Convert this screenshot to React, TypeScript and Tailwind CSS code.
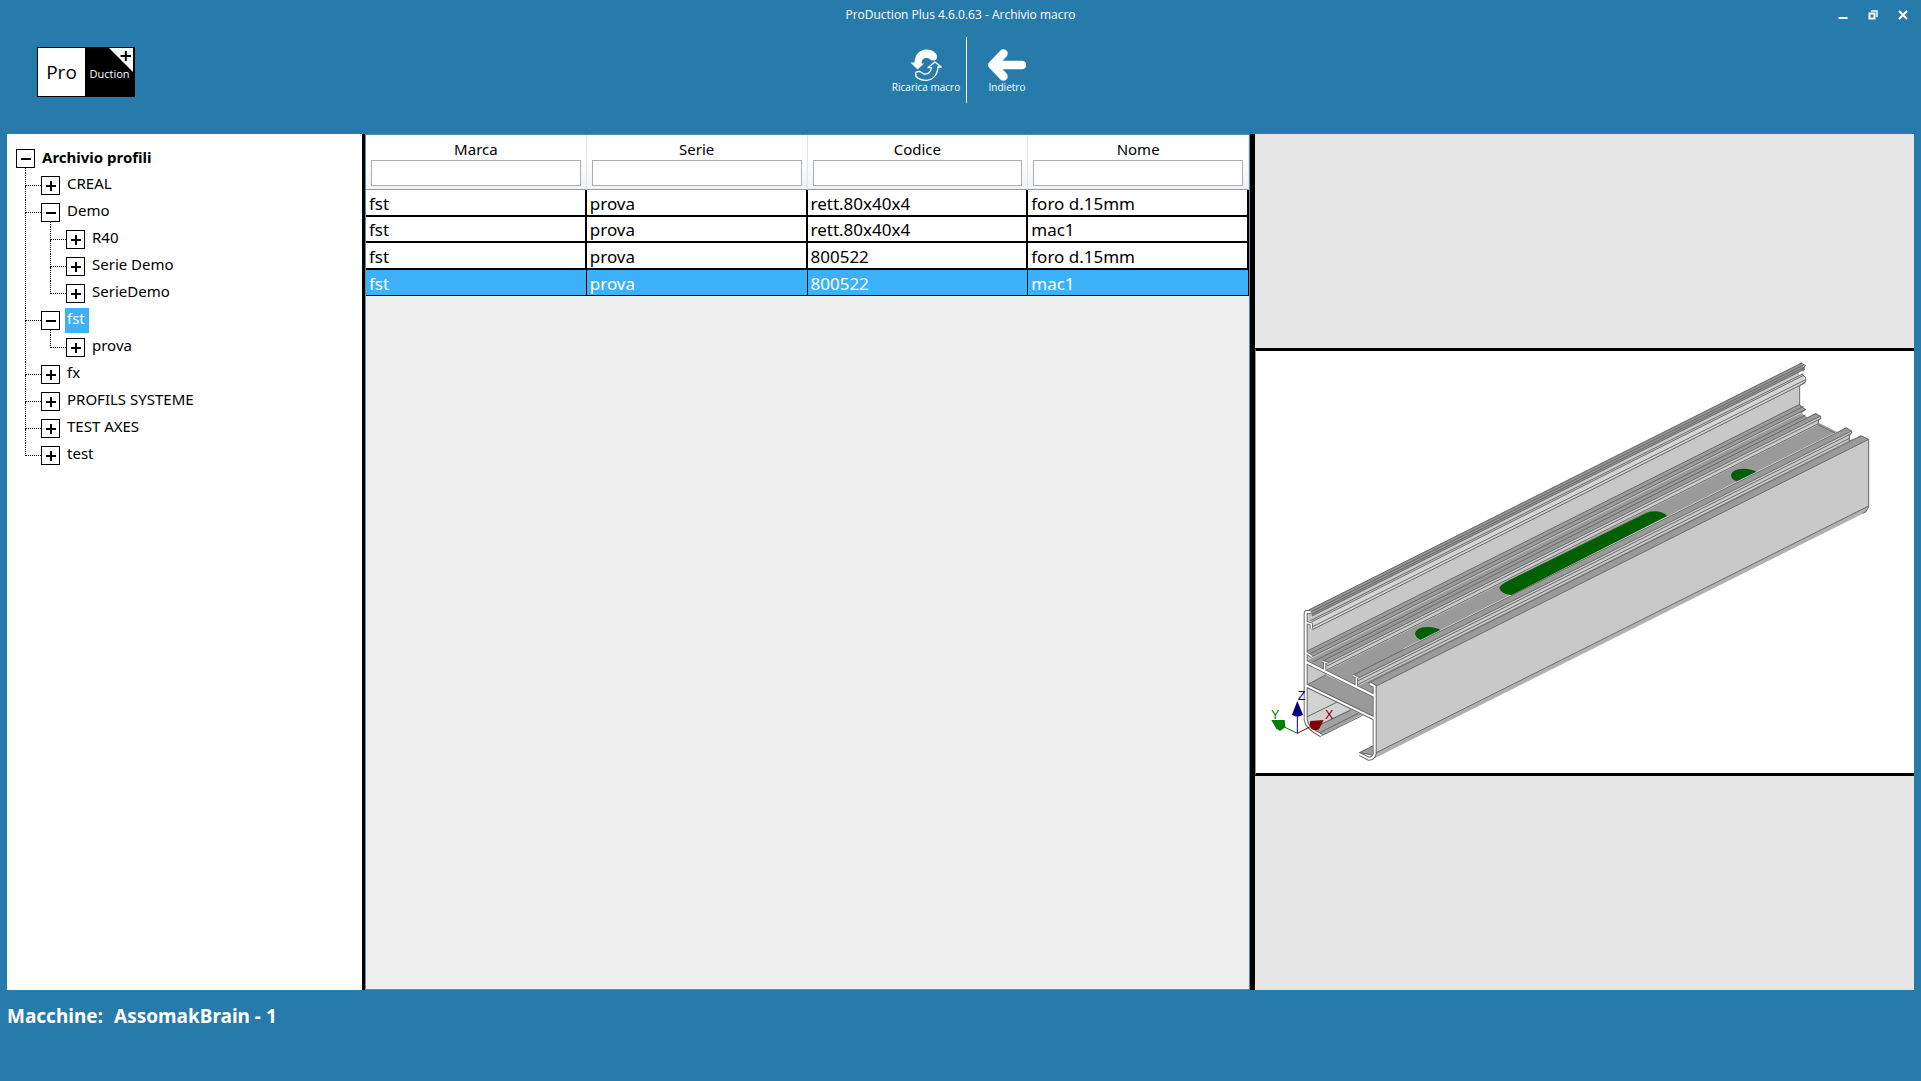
import { useState } from "react";

type TreeNode = { id: string; label: string; children?: TreeNode[] };

const TREE: TreeNode[] = [
  { id: "creal", label: "CREAL" },
  {
    id: "demo",
    label: "Demo",
    children: [
      { id: "demo-r40", label: "R40" },
      { id: "demo-serie", label: "Serie Demo" },
      { id: "demo-serie2", label: "SerieDemo" },
    ],
  },
  { id: "fst", label: "fst", children: [{ id: "fst-prova", label: "prova" }] },
  { id: "fx", label: "fx" },
  { id: "profils", label: "PROFILS SYSTEME" },
  { id: "axes", label: "TEST AXES" },
  { id: "test", label: "test" },
];

const COLUMNS = ["Marca", "Serie", "Codice", "Nome"];

const ROWS = [
  ["fst", "prova", "rett.80x40x4", "foro d.15mm"],
  ["fst", "prova", "rett.80x40x4", "mac1"],
  ["fst", "prova", "800522", "foro d.15mm"],
  ["fst", "prova", "800522", "mac1"],
];

function Logo() {
  return (
    <div className="relative flex h-[50px] w-[98px] border border-black bg-black text-black">
      <span className="flex w-[47px] items-center justify-center bg-white text-[19px]">Pro</span>
      <span className="flex flex-1 items-center justify-center pt-1 text-[11px] text-white">Duction</span>
      <svg className="absolute top-0 right-0 h-[25px] w-[25px]" viewBox="0 0 25 25">
        <path d="M0 0H24V24Z" fill="#fff" />
        <path d="M11.500 8H22M16.800 3V13" stroke="#000" strokeWidth="2" />
      </svg>
    </div>
  );
}

function ReloadIcon() {
  return (
    <svg className="h-8 w-8" viewBox="0 0 32 32" fill="none">
      <path
        d="M27 8.500C27.500 4 22 .5 16.500 .5 9.500 .5 5 5.500 4.500 13.500H.5L7.500 20.500 14 14.500H11.500C11.500 10.500 14 8.500 17.500 9 20 9.500 20.500 11.500 23 11.500 25.500 11.500 26.800 10.500 27 8.500Z"
        fill="#fff"
      />
      <path
        d="M5.500 24.500C5 28.500 10 31.300 15.500 31.300 22.500 31.300 27.500 26.500 28 18H31.200L25 13 18 18.500H21.500C21.500 22.500 18 25.500 14.500 25 12 24.500 11.500 22.500 9 22.500 7 22.500 5.700 23 5.500 24.500Z"
        stroke="#fff"
        strokeWidth="1.300"
        strokeLinejoin="round"
      />
    </svg>
  );
}

function BackIcon() {
  return (
    <svg className="h-8 w-[38px]" viewBox="0 0 38 32" fill="none">
      <path d="M15.500 4.500L4.500 16L15.500 27.500M5 16H34" stroke="#fff" strokeWidth="8.500" strokeLinecap="round" strokeLinejoin="round" />
    </svg>
  );
}

function ToggleBox({ open, label, onClick }: { open: boolean; label: string; onClick: () => void }) {
  return (
    <button
      type="button"
      aria-label={label}
      aria-expanded={open}
      onClick={onClick}
      className="h-[19px] w-[19px] shrink-0 border border-black bg-white"
    >
      <svg className="h-[17px] w-[17px]" viewBox="0 0 17 17" shapeRendering="crispEdges">
        <path d={open ? "M4 8H14V10H4Z" : "M4 8H8V4H10V8H14V10H10V14H8V10H4Z"} />
      </svg>
    </button>
  );
}

function TreeItem({
  node,
  last,
  selected,
  onSelect,
}: {
  node: TreeNode;
  last: boolean;
  selected: string;
  onSelect: (id: string) => void;
}) {
  const [open, setOpen] = useState(Boolean(node.children));
  const showChildren = open && node.children;

  return (
    <li className="flex">
      <div className="flex w-4 shrink-0 flex-col">
        <div className="h-[13px] border-b border-l border-dotted border-black" />
        {!last && <div className="flex-1 border-l border-dotted border-black" />}
      </div>
      <div>
        <div className="flex h-[27px] gap-[5px]">
          <div className="flex flex-col pt-[3px]">
            <ToggleBox open={open} label={node.label} onClick={() => setOpen(!open)} />
            {showChildren && <div className="ml-[9px] flex-1 border-l border-dotted border-black" />}
          </div>
          <button
            type="button"
            onClick={() => onSelect(node.id)}
            className={
              selected === node.id
                ? "h-[25px] bg-[#3cb1f7] pr-1 pb-[5px] pl-[2px] leading-5 text-white"
                : "h-[25px] pr-1 pb-[5px] pl-[2px] leading-5"
            }
          >
            {node.label}
          </button>
        </div>
        {showChildren && <TreeList nodes={node.children!} selected={selected} onSelect={onSelect} />}
      </div>
    </li>
  );
}

function TreeList({
  nodes,
  selected,
  onSelect,
}: {
  nodes: TreeNode[];
  selected: string;
  onSelect: (id: string) => void;
}) {
  return (
    <ul className="ml-[9px]">
      {nodes.map((node, i) => (
        <TreeItem key={node.id} node={node} last={i === nodes.length - 1} selected={selected} onSelect={onSelect} />
      ))}
    </ul>
  );
}

function ProfileTree() {
  const [selected, setSelected] = useState("fst");
  const [open, setOpen] = useState(true);

  return (
    <nav className="bg-white pt-3 pl-[9px] text-[15px] leading-[22px] whitespace-nowrap">
      <div className="flex h-[27px] gap-[7px]">
        <div className="flex flex-col pt-[3px]">
          <ToggleBox open={open} label="Archivio profili" onClick={() => setOpen(!open)} />
          {open && <div className="ml-[9px] flex-1 border-l border-dotted border-black" />}
        </div>
        <span className="font-bold">Archivio profili</span>
      </div>
      {open && <TreeList nodes={TREE} selected={selected} onSelect={setSelected} />}
    </nav>
  );
}

function MacroTable() {
  const [current, setCurrent] = useState(3);

  return (
    <div className="border border-[#5f87a8] bg-[#efefef]">
      <table className="w-full table-fixed border-separate border-spacing-0">
        <thead>
          <tr>
            {COLUMNS.map((name) => (
              <th
                key={name}
                className="h-[55px] border-r border-b border-r-[#e3e5e8] border-b-[#999] bg-linear-to-b from-white from-40% to-[#f1f2f4] px-[5px] pt-[3px] align-top text-[15px] leading-[22px] font-normal"
              >
                <label className="flex flex-col">
                  {name}
                  <input type="text" className="h-[26px] w-full border border-[#abadb3] bg-white px-1" />
                </label>
              </th>
            ))}
          </tr>
        </thead>
        <tbody className="text-[17px] leading-[22px]">
          {ROWS.map((row, i) => (
            <tr
              key={i}
              onClick={() => setCurrent(i)}
              className={
                i === current ? "h-[26px] bg-[#3cb1f7] text-white odd:h-[27px]" : "h-[26px] bg-white text-black odd:h-[27px]"
              }
            >
              {row.map((cell, j) => (
                <td
                  key={j}
                  className={
                    i === current
                      ? "border-r border-b border-black pt-[2px] pl-[3px]"
                      : "border-r-2 border-b-2 border-black pt-[2px] pl-[3px]"
                  }
                >
                  {cell}
                </td>
              ))}
            </tr>
          ))}
        </tbody>
      </table>
    </div>
  );
}

// Extrusion of the profile: every edge of the near section runs along this vector.
const DX = 1479;
const DY = -741;

type Point = [number, number];

const STRIPS: { a: Point; b: Point; fill: string }[] = [
  { a: [168, 815], b: [170, 968], fill: "#c8c8c8" },
  { a: [176, 810], b: [186, 828], fill: "#969696" },
  { a: [181, 842], b: [187, 868], fill: "#d5d5d5" },
  { a: [170, 934], b: [188, 950], fill: "#9c9c9c" },
  { a: [188, 950], b: [172, 966], fill: "#c8c8c8" },
  { a: [172, 962], b: [281, 1016], fill: "#9a9a9a" },
  { a: [216, 961], b: [233, 969], fill: "#9a9a9a" },
  { a: [233, 969], b: [226, 995], fill: "#cbcbcb" },
  { a: [309, 1005], b: [326, 1014], fill: "#9a9a9a" },
  { a: [326, 1014], b: [319, 1042], fill: "#cbcbcb" },
  { a: [319, 1042], b: [354, 1029], fill: "#9a9a9a" },
  { a: [354, 1029], b: [377, 1039], fill: "#9a9a9a" },
  { a: [377, 1239], b: [371, 1256], fill: "#b0b0b0" },
  { a: [377, 1039], b: [377, 1239], fill: "#c9c9c9" },
];

const EDGES: Point[] = [
  [176, 810], [184, 815], [186, 822], [186, 828],
  [181, 842], [184, 846], [188, 860], [187, 869],
  [170, 934], [182, 940], [188, 949], [188, 966],
  [221, 961], [233, 969], [231, 978], [226, 992],
  [309, 1005], [326, 1014], [323, 1023], [319, 1036],
  [354, 1029], [377, 1039], [377, 1239],
];

const SECTION_BODY =
  "M182 816H170Q167 816 167 822V1140Q170 1165 214 1186M168 966L374 1068M168 1036L374 1136M360 1031L374 1039V1240Q372 1256 356 1256L330 1243";
const SECTION_RIBS = "M168 847L184 852V866M168 938L186 950M216 963L232 969M224 967V992M309 1006L325 1014M319 1014V1038";

const SMALL_HOLE = "M495 880Q498 862 532 861Q560 862 571 870L512 899Q495 893 495 880Z";

function strip(a: Point, b: Point) {
  return `M${a[0]} ${a[1]}l${DX} ${DY}L${b[0] + DX} ${b[1] + DY}L${b[0]} ${b[1]}Z`;
}

function ProfileDrawing() {
  return (
    <svg className="block w-full" viewBox="18 33 1974 1266" role="img" aria-label="Profilo 800522">
      {/* lower part seen between the legs */}
      <path d="M168 1035L260 1083L335 1124L215 1187L185 1172L168 1145Z" fill="#d2d2d2" />
      <path d="M190 1162L300 1108L335 1124L215 1187Z" fill="#a2a2a2" />
      <path d="M172 1130L262 1086M186 1166L303 1110M205 1180L325 1120M215 1187L338 1126" stroke="#686868" strokeWidth="3" />
      <path d="M170 965L235 1000L170 1035Z" fill="#c8c8c8" />
      <path d="M172 1034L228 1004L372 1070V1134Z" fill="#9a9a9a" />
      <path d="M172 1034L228 1004" stroke="#686868" strokeWidth="3" />
      <path d="M328 1238L372 1216V1246Z" fill="#9a9a9a" stroke="#686868" strokeWidth="3" />
      {/* floor in front of the ribs */}
      <path d="M250 1005L460 925L500 985L374 1066Z" fill="#9a9a9a" />

      {STRIPS.map((s, i) => (
        <path key={i} d={strip(s.a, s.b)} fill={s.fill} />
      ))}
      {EDGES.map(([x, y], i) => (
        <path key={i} d={`M${x} ${y}l${DX} ${DY}`} stroke="#686868" strokeWidth="3" />
      ))}

      {/* far end outline */}
      <path
        d="M1648 73L1655 70L1667 77L1659 84V95M1655 103L1667 112V125L1649 137V196L1667 209L1652 217L1667 232M1696 221L1712 229V237L1705 240V255L1755 279M1782 266L1790 264L1805 273V280L1798 283V303M1825 290L1835 288L1856 298V500L1848 515L1838 520"
        fill="none"
        stroke="#686868"
        strokeWidth="3"
      />

      {/* machinings */}
      <g fill="#005f00">
        <path d={SMALL_HOLE} />
        <path d={SMALL_HOLE} transform="translate(948 -475)" />
        <path d="M748 745Q750 734 775 722L1190 518Q1225 506 1252 527L785 765Q755 763 748 745Z" />
      </g>

      {/* near section */}
      <g fill="none" strokeLinejoin="round">
        <path d={SECTION_BODY} stroke="#686868" strokeWidth="12" />
        <path d={SECTION_RIBS} stroke="#686868" strokeWidth="9" />
        <path d={SECTION_BODY} stroke="#fff" strokeWidth="6" />
        <path d={SECTION_RIBS} stroke="#fff" strokeWidth="4" />
      </g>

      {/* axes */}
      <g strokeWidth="3" fontSize="38" fontFamily="Liberation Sans, sans-serif">
        <path d="M142 1180L105 1162" stroke="#008000" />
        <path d="M142 1180L185 1158" stroke="#800000" />
        <path d="M142 1180V1120" stroke="#000080" />
        <path d="M64 1140H104L106 1162L90 1173L78 1165Z" fill="#008000" />
        <path d="M221 1140L181 1143Q176 1160 186 1168Q196 1174 207 1168Z" fill="#800000" />
        <path d="M142 1083L159 1124Q142 1135 126 1124Z" fill="#000080" />
        <text x="63" y="1138" fill="#008000">Y</text>
        <text x="225" y="1138" fill="#800000">X</text>
        <text x="143" y="1080" fill="#000080">Z</text>
      </g>
    </svg>
  );
}

function WindowButtons() {
  return (
    <div className="flex gap-[10px] pr-2">
      <button type="button" aria-label="Riduci" className="flex h-5 w-5 items-center justify-center">
        <svg className="h-3 w-3" viewBox="0 0 12 12">
          <path d="M1.500 8H10.500V10H1.500Z" fill="#fff" />
        </svg>
      </button>
      <button type="button" aria-label="Ripristina" className="flex h-5 w-5 items-center justify-center">
        <svg className="h-3 w-3" viewBox="0 0 12 12" fill="none" stroke="#fff">
          <path d="M2.500 4.500H7.500V9.500H2.500Z" strokeWidth="2" />
          <path d="M4 2H10V8" strokeWidth="1.500" />
        </svg>
      </button>
      <button type="button" aria-label="Chiudi" className="flex h-5 w-5 items-center justify-center">
        <svg className="h-3 w-3" viewBox="0 0 12 12" stroke="#fff" strokeWidth="2">
          <path d="M2 2L10 10M10 2L2 10" />
        </svg>
      </button>
    </div>
  );
}

export default function App() {
  return (
    <div className="flex min-h-screen flex-col bg-[#277bab] font-['Noto_Sans','Open_Sans',sans-serif] text-black">
      <header className="flex h-[134px] flex-col font-['Open_Sans','Noto_Sans',sans-serif] text-white">
        <div className="grid h-[30px] grid-cols-[1fr_auto_1fr] items-center">
          <div />
          <h1 className="text-[12px]">ProDuction Plus 4.6.0.63 - Archivio macro</h1>
          <div className="flex justify-end">
            <WindowButtons />
          </div>
        </div>
        <div className="grid grid-cols-[1fr_auto_1fr] pt-[7px]">
          <div className="pt-[10px] pl-[37px]">
            <Logo />
          </div>
          <div className="ml-3 flex h-[66px] text-[10px] leading-3">
            <button type="button" className="flex w-20 flex-col items-center pt-3 whitespace-nowrap">
              <ReloadIcon />
              Ricarica macro
            </button>
            <div className="w-px bg-white" />
            <button type="button" className="flex w-20 flex-col items-center pt-3">
              <BackIcon />
              Indietro
            </button>
          </div>
          <div />
        </div>
      </header>

      <main className="mx-[7px] grid flex-1 grid-cols-[355fr_893fr_659fr] bg-black">
        <ProfileTree />
        <div className="grid border-r-[5px] border-l-[3px] border-black">
          <MacroTable />
        </div>
        <aside className="flex flex-col bg-[#e6e6e6]">
          <div className="flex-1" />
          <div className="border-y-[3px] border-l border-black border-l-[#999] bg-white">
            <ProfileDrawing />
          </div>
          <div className="flex-1" />
        </aside>
      </main>

      <footer className="flex h-[91px] gap-[11px] px-[7px] pt-3 text-[19px] leading-7 font-bold text-white">
        <span>Macchine:</span>
        <span>AssomakBrain - 1</span>
      </footer>
    </div>
  );
}
